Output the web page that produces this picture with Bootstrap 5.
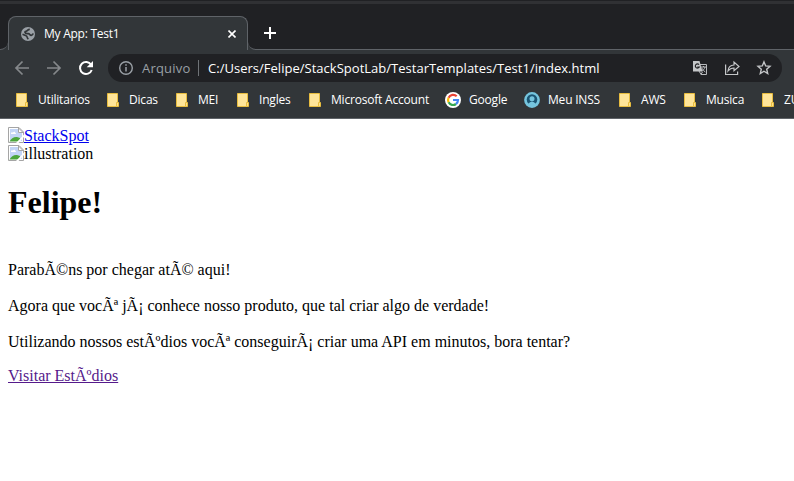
<!DOCTYPE html>
<html lang="pt-BR">
<head>
<meta charset="utf-8">
<title>My App: Test1</title>
<link href="https://cdn.jsdelivr.net/npm/bootstrap@5.3.0/dist/css/bootstrap.min.css" rel="stylesheet">
<style>
body{width:794px;height:481px;overflow:hidden;background:#fff;font-family:"Open Sans","Noto Sans",sans-serif;font-size:12px;line-height:16px;color:#fff}
svg{display:block;flex:none}
.chrome-top{height:50px;background:#202124;border-top:1px solid #202124}
.top-strip{height:3px;background:#303134}
.tab-row{height:46px;padding-top:12px}
.edge-l{width:8px;height:34px;border-bottom:1px solid #5f6368;border-bottom-right-radius:8px;background:#202124}
.tab-wrap{background:#323639}
.active-tab{width:240px;height:34px;padding:0 11px 0 12px;background:#323639;border:1px solid #5f6368;border-bottom:0;border-radius:8px 8px 0 0}
.tab-top{background:#202124}
.tab-title{margin-left:9px;letter-spacing:-.25px}
.edge-r{height:34px;background:#202124;border-bottom:1px solid #5f6368;border-bottom-left-radius:8px;padding-left:16px}
.toolbar{height:36px;background:#323639;padding:4px 12px 4px 14px}
.omnibox{height:28px;margin-left:14px;border-radius:14px;background:#202124;padding:0 10px;font-size:13px}
.scheme{width:49px;margin-left:8px;color:#9aa0a6;letter-spacing:.2px}
.divider{width:1px;height:16px;background:#6f7377;margin:0 9px 0 7px}
.address{letter-spacing:.02px}
.bookmarks{display:grid;grid-template-columns:91px 69px 61px 72px 138px 79px 93px 65px 78px 60px;height:33px;background:#323639;border-bottom:1px solid #5f6368;padding:0 0 4px 14px;overflow:hidden}
.mark-item{gap:8px;white-space:nowrap;letter-spacing:-.2px}
.page{padding:8px 8px 0;font-family:"Liberation Serif",serif;font-size:16px;line-height:18px;color:#000}
.page h1{font-size:32px;line-height:37px;font-weight:700;margin:21px 0 40px}
.page p{margin:0 0 18px}
.page .last-p{margin-bottom:16px}
.home{color:#0000ee}
.visited{color:#551a8b}
</style>
<script src="https://cdn.jsdelivr.net/npm/bootstrap@5.3.0/dist/js/bootstrap.bundle.min.js"></script>
</head>
<body>
<svg width="0" height="0" class="position-absolute">
<symbol id="folder" viewBox="0 0 16 16"><path d="M2.500 1.500h10v13h-10z" fill="#ffe599" stroke="#e8bd3f"/><path d="M11.500 10.500h2v4h-2z" fill="#ffe08a" stroke="#e8bd3f"/></symbol>
<symbol id="broken" viewBox="0 0 16 16"><path d="M.5.5h10.500l4.500 4.500v10.500H.5z" fill="#fff" stroke="#a5a5a5"/><path d="M2 2h8.500v4H14v8H2z" fill="#c3d5f6"/><path d="M3 7c-.3-1.700 1.300-2.200 1.800-1.300C5.500 4 7.500 4.600 7.300 6c1 0 1 1 .4 1z" fill="#fff"/><path d="M1.500 14.500c1.500-3 4.500-5 7.500-4.500l3 1v3.500z" fill="#4ca63c"/><path d="M10.500 1v4.500H15z" fill="#fff" stroke="#a5a5a5"/><path d="M8 16l8-8.500V10l-5.500 6z" fill="#fff"/></symbol>
</svg>
<header>
<div class="chrome-top">
<div class="top-strip"></div>
<div class="tab-row d-flex">
<div class="tab-wrap"><div class="edge-l"></div></div>
<div class="tab-top"><div class="active-tab d-flex align-items-center">
<svg width="14" height="14" viewBox="0 0 14 14"><circle cx="7" cy="7" r="7" fill="#9aa0a6"/><path d="M8.800 2.300C6.300 2.300 6.800 4 5 4.300S3.800 6.600 6 6.600h1.300c1.700 0 1.200 1.800 3 1.700 1.200 0 1.200-1.300 2.200-1.400M1.500 7.300l3.600 1.500c1.500.5.500 2 2.300 3.400" fill="none" stroke="#323639" stroke-width="1.700"/></svg>
<span class="tab-title">My App: Test1</span>
<svg class="ms-auto" width="8" height="8" viewBox="0 0 8 8"><path d="M.5.5l7 7m0-7l-7 7" stroke="#fff" stroke-width="1.600"/></svg>
</div></div>
<div class="tab-wrap flex-grow-1"><div class="edge-r d-flex align-items-center"><svg width="12" height="12" viewBox="0 0 12 12"><path d="M6 0v12M0 6h12" stroke="#fff" stroke-width="2"/></svg></div></div>
</div>
</div>
<nav class="toolbar d-flex align-items-center">
<svg width="16" height="16" viewBox="0 0 16 16" fill="none" stroke="#85888b" stroke-width="1.700"><path d="M15 8H2m6.500-6.500L2 8l6.500 6.500"/></svg>
<svg class="ms-3" width="16" height="16" viewBox="0 0 16 16" fill="none" stroke="#85888b" stroke-width="1.700"><path d="M1 8h13M7.500 1.500L14 8l-6.500 6.500"/></svg>
<svg class="ms-3" width="16" height="16" viewBox="0 0 16 16"><path d="M13.100 4.800A6 6 0 1 0 13.700 10" fill="none" stroke="#fff" stroke-width="2"/><path d="M15 1v6.300H8.700z" fill="#fff"/></svg>
<div class="omnibox d-flex align-items-center flex-grow-1">
<svg width="16" height="16" viewBox="0 0 16 16"><circle cx="8" cy="8" r="6.300" fill="none" stroke="#9aa0a6" stroke-width="1.400"/><path d="M8 7v4.500M8 4.300v1.500" stroke="#9aa0a6" stroke-width="1.500"/></svg>
<span class="scheme">Arquivo</span><span class="divider"></span><span class="address">C:/Users/Felipe/StackSpotLab/TestarTemplates/Test1/index.html</span>
<svg class="ms-auto" width="16" height="16" viewBox="0 0 16 16"><path d="M6 4.500h8.500v10H9L7 11" fill="none" stroke="#b8babd"/><path d="M1 1h6.500l3 10.500H1z" fill="#c4c6c8"/><path d="M7 4.600a2.100 2.100 0 1 0 .2 2.500H5.300" fill="none" stroke="#202124" stroke-width="1.100"/><path d="M9 7h5M11.500 6v1M13 7c-.5 2-2 3.500-3.200 4.200M10 8.200c.8 1.700 2 2.900 3.300 3.800M9 14.300l1.500-2.300" fill="none" stroke="#b8babd"/></svg>
<svg class="ms-3" width="16" height="16" viewBox="0 0 16 16" fill="none" stroke="#c4c6c8" stroke-width="1.200"><path d="M1.600 4.500v10h12v-3M4 11c.3-4 2.500-5.900 6-6V2l5 4.500-5 4.300V8C7.500 8 5.600 8.900 4 11z"/></svg>
<svg class="ms-3" width="16" height="16" viewBox="0 0 16 16"><path d="M8 1.900l1.700 4 4.300.4-3.300 2.900 1 4.300L8 11.200l-3.700 2.300 1-4.300L2 6.300l4.300-.4z" fill="none" stroke="#c4c6c8" stroke-width="1.400"/></svg>
</div>
</nav>
<nav class="bookmarks">
<div class="mark-item d-flex align-items-center"><svg width="16" height="16"><use href="#folder"/></svg><span>Utilitarios</span></div>
<div class="mark-item d-flex align-items-center"><svg width="16" height="16"><use href="#folder"/></svg><span>Dicas</span></div>
<div class="mark-item d-flex align-items-center"><svg width="16" height="16"><use href="#folder"/></svg><span>MEI</span></div>
<div class="mark-item d-flex align-items-center"><svg width="16" height="16"><use href="#folder"/></svg><span>Ingles</span></div>
<div class="mark-item d-flex align-items-center"><svg width="16" height="16"><use href="#folder"/></svg><span>Microsoft Account</span></div>
<div class="mark-item d-flex align-items-center"><svg width="16" height="16" viewBox="0 0 16 16"><circle cx="8" cy="8" r="8" fill="#fff"/><g fill="none" stroke-width="2.200"><path d="M11.700 4.300A5 5 0 0 0 3.600 5.700" stroke="#ea4335"/><path d="M3.600 5.700a5 5 0 0 0 0 4.600" stroke="#fbbc05"/><path d="M3.600 10.300A5 5 0 0 0 11 12" stroke="#34a853"/><path d="M11 12a5 5 0 0 0 2-4H8" stroke="#4285f4"/></g></svg><span>Google</span></div>
<div class="mark-item d-flex align-items-center"><svg width="16" height="16" viewBox="0 0 16 16"><circle cx="8" cy="8" r="7.900" fill="#75c5de"/><circle cx="8" cy="7.500" r="5.300" fill="#1b5573"/><circle cx="8" cy="6.800" r="2.500" fill="#75c5de"/><path d="M4 12q4-5 8 0l-2 2H6z" fill="#75c5de"/></svg><span>Meu INSS</span></div>
<div class="mark-item d-flex align-items-center"><svg width="16" height="16"><use href="#folder"/></svg><span>AWS</span></div>
<div class="mark-item d-flex align-items-center"><svg width="16" height="16"><use href="#folder"/></svg><span>Musica</span></div>
<div class="mark-item d-flex align-items-center"><svg width="16" height="16"><use href="#folder"/></svg><span>ZUP</span></div>
</nav>
</header>
<main class="page">
<a class="home d-flex" href="#"><svg width="16" height="16"><use href="#broken"/></svg><span>StackSpot</span></a>
<div class="d-flex"><svg width="16" height="16"><use href="#broken"/></svg><span>illustration</span></div>
<h1>Felipe!</h1>
<p>ParabÃ©ns por chegar atÃ© aqui!</p>
<p>Agora que vocÃª jÃ¡ conhece nosso produto, que tal criar algo de verdade!</p>
<p class="last-p">Utilizando nossos estÃºdios vocÃª conseguirÃ¡ criar uma API em minutos, bora tentar?</p>
<a class="visited" href="#">Visitar EstÃºdios</a>
</main>
</body>
</html>
